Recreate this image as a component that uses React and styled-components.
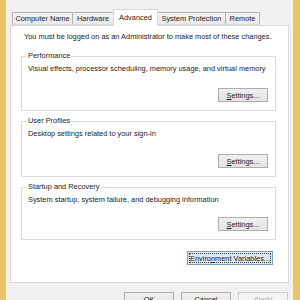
import React from 'react'
import styled, { createGlobalStyle } from 'styled-components'

const GlobalStyle = createGlobalStyle`
  html, body {
    margin: 0;
    padding: 0;
  }
  body {
    width: 300px;
    height: 300px;
    overflow: hidden;
    font-family: "Liberation Sans", Arial, sans-serif;
  }
`

const Frame = styled.div`
  width: 300px;
  height: 300px;
  box-sizing: border-box;
  padding: 0 7px 0 6px;
  display: flex;
  background: #eac563;
`

const Dialog = styled.div`
  flex: 1;
  display: flex;
  flex-direction: column;
  overflow: hidden;
  background: #f0f0f0;
  padding: 9px 3px 0 3px;
  border-left: 1px solid #f7f1df;
  border-right: 1px solid #f7f1df;
  font-size: 7.4px;
  color: #1b1b1b;
`

const TabStrip = styled.div`
  display: flex;
  align-items: flex-end;
  height: 16px;
  padding-left: 2px;
`

const Tab = styled.div`
  box-sizing: border-box;
  width: ${p => p.$w}px;
  height: ${p => (p.$active ? 17 : 13)}px;
  margin-right: -1px;
  margin-bottom: ${p => (p.$active ? -1 : 0)}px;
  display: flex;
  align-items: center;
  justify-content: center;
  white-space: nowrap;
  border: 1px solid ${p => (p.$active ? '#d9d9d9' : '#b4b4b4')};
  border-bottom: ${p => (p.$active ? 'none' : '1px solid #d9d9d9')};
  background: ${p => (p.$active ? '#fff' : 'linear-gradient(#f3f3f3, #eaeaea)')};
  padding-bottom: ${p => (p.$active ? 2 : 0)}px;
  position: relative;
  z-index: ${p => (p.$active ? 1 : 0)};
`

const Panel = styled.div`
  box-sizing: border-box;
  height: 258px;
  flex-shrink: 0;
  background: #fff;
  border: 1px solid #d9d9d9;
  padding: 6px 12px 0 10px;
  display: flex;
  flex-direction: column;
`

const Notice = styled.div`
  line-height: 10px;
  padding-left: 3px;
  margin-bottom: 9px;
  white-space: nowrap;
`

const Group = styled.fieldset`
  margin: ${p => (p.$first ? 0 : 5)}px 0 0 0;
  padding: 3px 7px 8px 6px;
  border: 1px solid #dcdcdc;
  min-width: 0;
  display: flex;
  flex-direction: column;
`

const Legend = styled.legend`
  padding: 0 1px;
  margin-left: -1px;
  line-height: 10px;
  font-size: 7.4px;
`

const Desc = styled.div`
  line-height: 10px;
  white-space: nowrap;
`

const ButtonRow = styled.div`
  display: flex;
  justify-content: flex-end;
  gap: 7px;
  margin-top: ${p => p.$top || 0}px;
  padding-right: ${p => p.$right || 0}px;
`

const Button = styled.div`
  box-sizing: border-box;
  width: ${p => p.$w || 50}px;
  height: 14px;
  display: flex;
  align-items: center;
  justify-content: center;
  white-space: nowrap;
  font-size: 7.4px;
  color: ${p => (p.$disabled ? '#a3a3a3' : '#1b1b1b')};
  border: 1px solid ${p => (p.$default ? '#7f9db9' : p.$disabled ? '#cfcfcf' : '#adadad')};
  background: ${p =>
    p.$default ? '#dce7f1' : p.$disabled ? '#f4f4f4' : 'linear-gradient(#f0f0f0, #e3e3e3)'};
  outline: ${p => (p.$default ? '1px dotted #3a3a3a' : 'none')};
  outline-offset: -3px;
`

const U = styled.span`
  text-decoration: underline;
`

const Footer = styled.div`
  padding-top: 9px;
  padding-right: 1px;
`

const tabs = [
  { label: 'Computer Name', w: 61 },
  { label: 'Hardware', w: 42 },
  { label: 'Advanced', w: 45, active: true },
  { label: 'System Protection', w: 69 },
  { label: 'Remote', w: 35 },
]

const groups = [
  { title: 'Performance', text: 'Visual effects, processor scheduling, memory usage, and virtual memory', gap: 14 },
  { title: 'User Profiles', text: 'Desktop settings related to your sign-in', gap: 15 },
  { title: 'Startup and Recovery', text: 'System startup, system failure, and debugging information', gap: 12 },
]

export default function App() {
  return (
    <Frame>
      <GlobalStyle />
      <Dialog>
        <TabStrip>
          {tabs.map(t => (
            <Tab key={t.label} $w={t.w} $active={t.active}>{t.label}</Tab>
          ))}
        </TabStrip>
        <Panel>
          <Notice>You must be logged on as an Administrator to make most of these changes.</Notice>
          {groups.map((g, i) => (
            <Group key={g.title} $first={i === 0}>
              <Legend>{g.title}</Legend>
              <Desc>{g.text}</Desc>
              <ButtonRow $top={g.gap}>
                <Button><U>S</U>ettings...</Button>
              </ButtonRow>
            </Group>
          ))}
          <ButtonRow $top={11} $right={3}>
            <Button $w={86} $default>Enviro<U>n</U>ment Variables...</Button>
          </ButtonRow>
        </Panel>
        <Footer>
          <ButtonRow>
            <Button>OK</Button>
            <Button>Cancel</Button>
            <Button $disabled><U>A</U>pply</Button>
          </ButtonRow>
        </Footer>
      </Dialog>
    </Frame>
  )
}
